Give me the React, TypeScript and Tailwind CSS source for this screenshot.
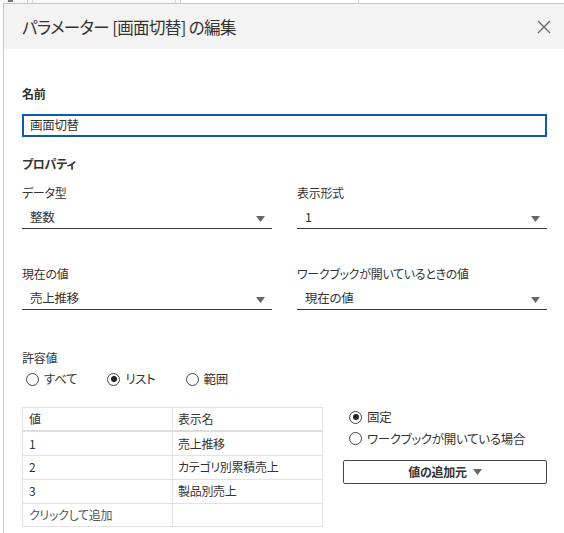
import React from "react";

const font = { fontFamily: '"Noto Sans CJK JP", "Noto Sans", sans-serif', fontFeatureSettings: '"palt"' };

function Caret() {
    return (
        <svg width="9" height="6" viewBox="0 0 9 6" className="shrink-0">
            <path d="M0 0 L9 0 L4.5 6 Z" fill="#666"/>
        </svg>
    );
}

function Radio({checked, label}: {checked?: boolean; label: string}) {
    return (
        <label className="flex items-center gap-[5px]">
            <span className="w-[13px] h-[13px] rounded-full border border-[#444] bg-white flex items-center justify-center shrink-0">
                {checked && <span className="w-[6px] h-[6px] rounded-full bg-[#222]"/>}
            </span>
            <span>{label}</span>
        </label>
    );
}

function Select({label, value}: {label: string; value: string}) {
    return (
        <div className="flex flex-col">
            <div className="h-[16px] leading-[16px]">{label}</div>
            <div className="mt-[8px] h-[20px] flex items-center justify-between pl-[8px] pr-[7px] border-b border-[#333]">
                <span className="text-[12.5px] pb-[2px]">{value}</span>
                <Caret/>
            </div>
        </div>
    );
}

const rows = [
    ["1", "売上推移"],
    ["2", "カテゴリ別累積売上"],
    ["3", "製品別売上"],
];

export default function App() {
    return (
        <div className="w-[564px] h-[533px] overflow-hidden bg-white text-[12px] text-[#333] tracking-[-0.3px]" style={font}>
            {/* background app behind the dialog */}
            <div className="h-[3px] flex bg-[#f7f7f7]">
                <div className="w-[27px] relative">
                    <span className="absolute left-[8px] top-0 w-[5px] h-[2px] bg-[#777]"/>
                </div>
                <div className="w-[6px] border-x border-[#d6d6d6]"/>
                <div className="w-[142px] bg-[#fafafa]"/>
                <div className="w-[6px] border-x border-[#d6d6d6]"/>
                <div className="w-[178px] bg-white border-r border-[#d6d6d6]"/>
                <div className="flex-1 bg-white"/>
            </div>

            <div className="ml-[3px] border-l border-t border-[#c6c6c6] h-full">
                <div className="h-[45px] bg-[#f3f3f3] flex items-center justify-between pl-[18px] pr-[13px]">
                    <span className="text-[16.5px] tracking-[-0.6px] text-[#333] leading-none pt-[1px]">パラメーター [画面切替] の編集</span>
                    <svg width="14" height="14" viewBox="0 0 14 14">
                        <path d="M1 1 L13 13 M13 1 L1 13" stroke="#666" strokeWidth="1.3"/>
                    </svg>
                </div>

                <div className="pl-[18px] pr-[17px] pt-[37px]">
                    <div className="font-bold h-[16px] leading-[16px]">名前</div>
                    <div className="mt-[12px] h-[23px] border-2 border-[#0f5ca6] flex items-center pl-[6px] text-[12.5px]">
                        画面切替
                    </div>

                    <div className="mt-[19px] font-bold h-[16px] leading-[16px]">プロパティ</div>

                    <div className="mt-[13px] grid grid-cols-2 gap-x-[25px] gap-y-[37px]">
                        <Select label="データ型" value="整数"/>
                        <Select label="表示形式" value="1"/>
                        <Select label="現在の値" value="売上推移"/>
                        <Select label="ワークブックが開いているときの値" value="現在の値"/>
                    </div>

                    <div className="mt-[40px] h-[16px] leading-[16px]">許容値</div>
                    <div className="mt-[4px] flex items-center gap-[30px] pl-[4px] text-[12.5px]">
                        <Radio label="すべて"/>
                        <Radio checked label="リスト"/>
                        <Radio label="範囲"/>
                    </div>

                    <div className="mt-[18px] flex items-start gap-[20px]">
                        <table className="w-[301px] border-collapse border border-[#e2e2e2] text-[12px] table-fixed">
                            <thead>
                                <tr className="h-[24px] border-b-2 border-[#dedede]">
                                    <th className="w-[150px] font-normal text-left pl-[6px] border-r border-[#e2e2e2]">値</th>
                                    <th className="font-normal text-left pl-[5px]">表示名</th>
                                </tr>
                            </thead>
                            <tbody>
                                {rows.map(([v, name]) => (
                                    <tr key={v} className="h-[24px] border-b border-[#e2e2e2]">
                                        <td className="pl-[6px] border-r border-[#e2e2e2]">{v}</td>
                                        <td className="pl-[5px]">{name}</td>
                                    </tr>
                                ))}
                                <tr className="h-[23px]">
                                    <td className="pl-[6px] border-r border-[#e2e2e2] text-[#555]">クリックして追加</td>
                                    <td/>
                                </tr>
                            </tbody>
                        </table>

                        <div className="flex-1 flex flex-col pt-[1px]">
                            <div className="flex flex-col gap-[3px] pl-[6px] text-[12.5px]">
                                <Radio checked label="固定"/>
                                <Radio label="ワークブックが開いている場合"/>
                            </div>
                            <button className="mt-[12px] h-[24px] border border-[#444] rounded-[2px] bg-white flex items-center justify-center gap-[6px] font-bold text-[12px] text-[#333]">
                                値の追加元
                                <Caret/>
                            </button>
                        </div>
                    </div>
                </div>
            </div>
        </div>
    );
}
